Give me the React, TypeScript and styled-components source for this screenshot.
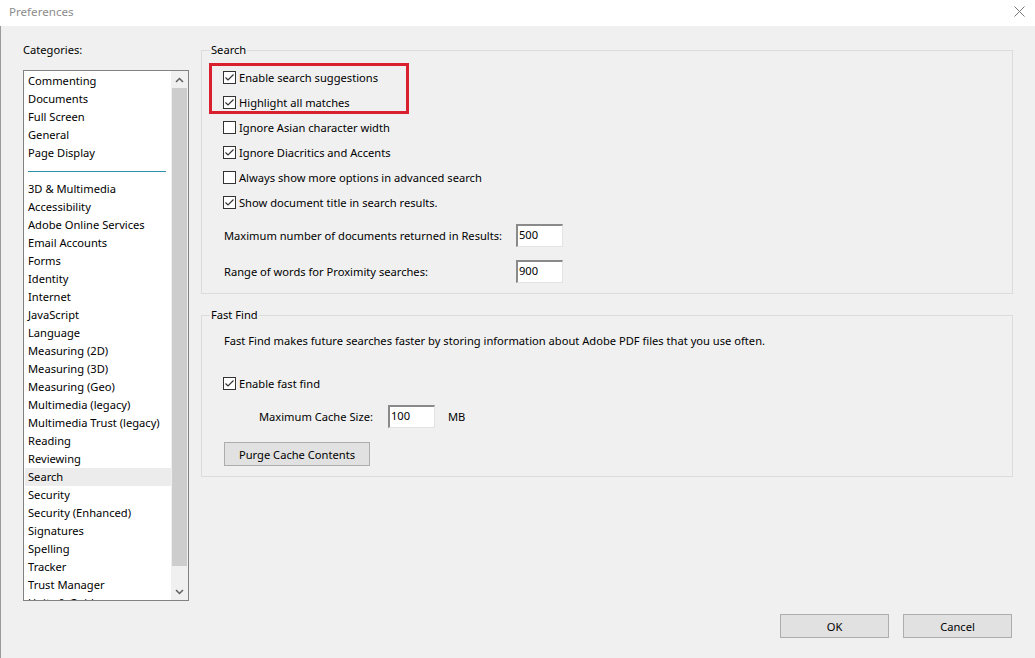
import React from "react";
import styled, { createGlobalStyle } from "styled-components";

const Global = createGlobalStyle`
  html, body { margin: 0; padding: 0; background: #f0f0f0; }
  body { font-family: "Noto Sans", "Segoe UI", sans-serif; font-size: 11.15px; color: #000; }
  * { box-sizing: border-box; }
`;

const Window = styled.div`
  width: 1035px;
  height: 658px;
  display: flex;
  flex-direction: column;
  background: #f0f0f0;
  overflow: hidden;
`;

const TitleBar = styled.div`
  height: 26px;
  flex: none;
  background: #fff;
  display: flex;
  align-items: center;
  justify-content: space-between;
  padding: 0 10px 3px 9px;
  color: #8c8c8c;
  font-size: 11.6px;
`;

const Body = styled.div`
  flex: 1;
  display: flex;
  flex-direction: column;
  border-left: 1px solid #9a9a9a;
  padding: 16px 22px 0 22px;
`;

const Columns = styled.div`
  display: flex;
  gap: 12px;
`;

const LeftCol = styled.div`
  width: 166px;
  flex: none;
  display: flex;
  flex-direction: column;
`;

const Label = styled.div`
  line-height: 16px;
  height: 16px;
  white-space: nowrap;
`;

const ListBox = styled.div`
  margin-top: 12px;
  height: 531px;
  border: 1px solid #828282;
  background: #fff;
  display: flex;
  overflow: hidden;
`;

const ListItems = styled.div`
  flex: 1;
  padding-left: 1px;
  padding-top: 1px;
  overflow: hidden;
`;

const Item = styled.div<{ $selected?: boolean }>`
  height: 18px;
  line-height: 18px;
  padding-left: 3px;
  white-space: nowrap;
  background: ${(p) => (p.$selected ? "#ececec" : "transparent")};
`;

const Separator = styled.div`
  height: 18px;
  display: flex;
  align-items: center;
  padding: 0 3px 0 3px;
  &::after {
    content: "";
    display: block;
    height: 1px;
    width: 138px;
    background: #2c8fa8;
  }
`;

const ScrollBar = styled.div`
  width: 17px;
  flex: none;
  display: flex;
  flex-direction: column;
  background: #f0f0f0;
`;

const Arrow = styled.div`
  height: 17px;
  display: flex;
  align-items: center;
  justify-content: center;
`;

const Thumb = styled.div`
  margin: 0 1px;
  height: 478px;
  background: #cdcdcd;
`;

const Track = styled.div`
  flex: 1;
`;

const RightCol = styled.div`
  width: 812px;
  flex: none;
  display: flex;
  flex-direction: column;
`;

const Group = styled.section<{ $gap?: number }>`
  position: relative;
  margin-top: ${(p) => p.$gap ?? 8}px;
  border: 1px solid #dcdcdc;
  padding: 0 20px 10px 21px;
`;

const Legend = styled.div`
  margin: -9px 0 0 -13px;
  padding: 0 1px;
  width: fit-content;
  background: #f0f0f0;
  line-height: 16px;
  height: 16px;
`;

const Highlight = styled.div`
  position: absolute;
  left: 7px;
  top: 12px;
  width: 200px;
  height: 51px;
  border: 3px solid #d8202f;
  pointer-events: none;
`;

const CheckList = styled.div<{ $top?: number }>`
  padding-top: ${(p) => p.$top ?? 7}px;
  display: flex;
  flex-direction: column;
`;

const CheckRow = styled.div`
  height: 25px;
  display: flex;
  align-items: center;
  gap: 3px;
  white-space: nowrap;
`;

const Box = styled.span`
  width: 13px;
  height: 13px;
  flex: none;
  border: 1px solid #333;
  background: #fff;
  display: flex;
  align-items: center;
  justify-content: center;
`;

const NumGrid = styled.div`
  margin-top: 9px;
  padding-left: 1px;
  display: grid;
  grid-template-columns: 292px 47px;
  row-gap: 13px;
  align-items: center;
  white-space: nowrap;
`;

const Input = styled.div<{ $w?: number }>`
  width: ${(p) => p.$w ?? 47}px;
  height: 23px;
  background: #fff;
  border-top: 2px solid #8a8a8a;
  border-left: 2px solid #8a8a8a;
  border-right: 1px solid #e3e3e3;
  border-bottom: 1px solid #e3e3e3;
  padding: 0 0 0 1px;
  line-height: 17px;
`;

const Desc = styled.div`
  margin-top: 10px;
  padding-left: 1px;
  line-height: 16px;
  white-space: nowrap;
`;

const CacheRow = styled.div`
  margin-top: 9px;
  padding-left: 36px;
  display: flex;
  align-items: center;
  height: 23px;
  white-space: nowrap;
`;

const CacheLabel = styled.span`
  width: 129px;
`;

const Unit = styled.span`
  margin-left: 13px;
`;

const Button = styled.button<{ $w: number }>`
  width: ${(p) => p.$w}px;
  height: 24px;
  background: #e1e1e1;
  border: 1px solid #adadad;
  font: inherit;
  color: #000;
  padding: 0;
  margin: 0;
`;

const PurgeWrap = styled.div`
  margin-top: 14px;
  padding-left: 1px;
`;

const Footer = styled.div`
  margin-top: 13px;
  padding-right: 1px;
  display: flex;
  justify-content: flex-end;
  gap: 14px;
`;

const Check = ({ on }: { on: boolean }) => (
  <Box>
    {on && (
      <svg width="11" height="11" viewBox="0 0 11 11">
        <path d="M1.5 5.5 L4 8 L9.5 2.5" fill="none" stroke="#333" strokeWidth="1.2" />
      </svg>
    )}
  </Box>
);

const Chevron = ({ up }: { up: boolean }) => (
  <svg width="9" height="6" viewBox="0 0 9 6">
    <path
      d={up ? "M1 5 L4.5 1.5 L8 5" : "M1 1 L4.5 4.5 L8 1"}
      fill="none"
      stroke="#606060"
      strokeWidth="1.5"
    />
  </svg>
);

const top = ["Commenting", "Documents", "Full Screen", "General", "Page Display"];
const rest = [
  "3D & Multimedia",
  "Accessibility",
  "Adobe Online Services",
  "Email Accounts",
  "Forms",
  "Identity",
  "Internet",
  "JavaScript",
  "Language",
  "Measuring (2D)",
  "Measuring (3D)",
  "Measuring (Geo)",
  "Multimedia (legacy)",
  "Multimedia Trust (legacy)",
  "Reading",
  "Reviewing",
  "Search",
  "Security",
  "Security (Enhanced)",
  "Signatures",
  "Spelling",
  "Tracker",
  "Trust Manager",
  "Units & Guides",
];

const searchOpts: [string, boolean][] = [
  ["Enable search suggestions", true],
  ["Highlight all matches", true],
  ["Ignore Asian character width", false],
  ["Ignore Diacritics and Accents", true],
  ["Always show more options in advanced search", false],
  ["Show document title in search results.", true],
];

export default function App() {
  return (
    <Window>
      <Global />
      <TitleBar>
        <span>Preferences</span>
        <svg width="11" height="11" viewBox="0 0 11 11">
          <path d="M0.5 0.5 L10.5 10.5 M10.5 0.5 L0.5 10.5" stroke="#777" strokeWidth="1" />
        </svg>
      </TitleBar>
      <Body>
        <Columns>
          <LeftCol>
            <Label>Categories:</Label>
            <ListBox>
              <ListItems>
                {top.map((t) => (
                  <Item key={t}>{t}</Item>
                ))}
                <Separator />
                {rest.map((t) => (
                  <Item key={t} $selected={t === "Search"}>
                    {t}
                  </Item>
                ))}
              </ListItems>
              <ScrollBar>
                <Arrow>
                  <Chevron up />
                </Arrow>
                <Thumb />
                <Track />
                <Arrow>
                  <Chevron up={false} />
                </Arrow>
              </ScrollBar>
            </ListBox>
          </LeftCol>
          <RightCol>
            <Group>
              <Legend>Search</Legend>
              <Highlight />
              <CheckList>
                {searchOpts.map(([t, on]) => (
                  <CheckRow key={t}>
                    <Check on={on} />
                    {t}
                  </CheckRow>
                ))}
              </CheckList>
              <NumGrid>
                <span>Maximum number of documents returned in Results:</span>
                <Input>500</Input>
                <span>Range of words for Proximity searches:</span>
                <Input>900</Input>
              </NumGrid>
            </Group>
            <Group $gap={21}>
              <Legend>Fast Find</Legend>
              <Desc>
                Fast Find makes future searches faster by storing information about Adobe PDF files that you use often.
              </Desc>
              <CheckList $top={22}>
                <CheckRow>
                  <Check on />
                  Enable fast find
                </CheckRow>
              </CheckList>
              <CacheRow>
                <CacheLabel>Maximum Cache Size:</CacheLabel>
                <Input>100</Input>
                <Unit>MB</Unit>
              </CacheRow>
              <PurgeWrap>
                <Button $w={146}>Purge Cache Contents</Button>
              </PurgeWrap>
            </Group>
          </RightCol>
        </Columns>
        <Footer>
          <Button $w={109}>OK</Button>
          <Button $w={109}>Cancel</Button>
        </Footer>
      </Body>
    </Window>
  );
}
